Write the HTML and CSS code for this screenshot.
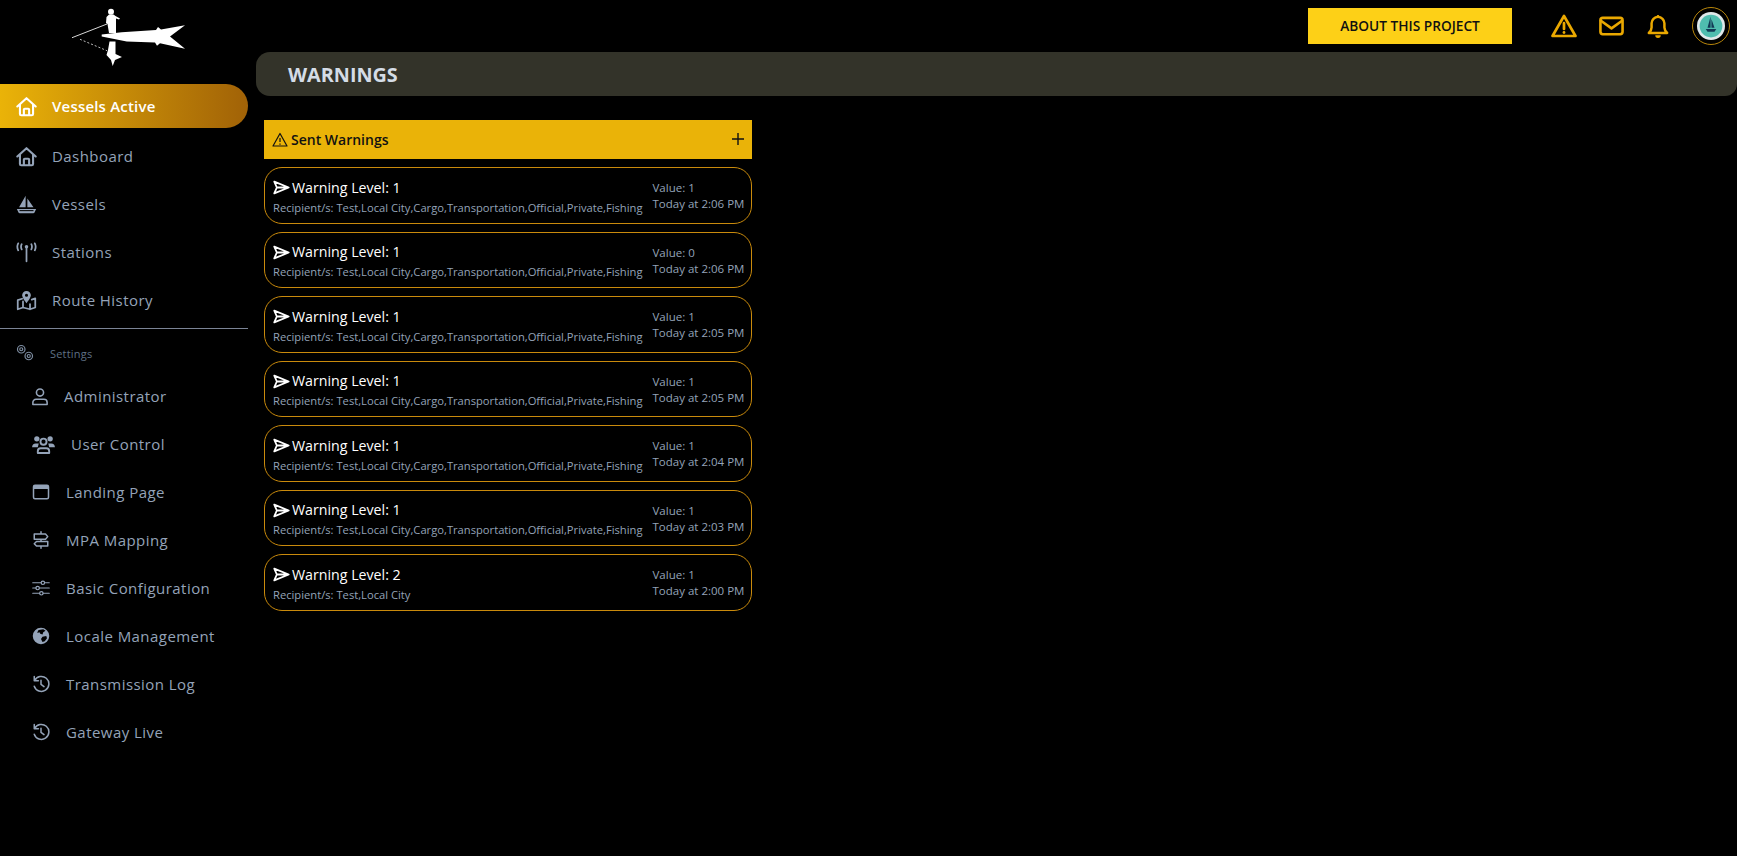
FILE: index.html
```html
<!DOCTYPE html>
<html lang="en">
<head>
<meta charset="utf-8">
<title>Warnings</title>
<link rel="stylesheet" href="styles.css">
</head>
<body>
<svg class="sprite" width="0" height="0" aria-hidden="true">
  <symbol id="i-home" viewBox="0 0 24 24"><path d="M1.500 12 12 2.500 22.500 12M4.500 10v10.500a1.500 1.500 0 0 0 1.500 1.500h12a1.500 1.500 0 0 0 1.500-1.500V10M9 22v-6.500a1 1 0 0 1 1-1h4a1 1 0 0 1 1 1V22" fill="none" stroke="currentColor" stroke-width="2.400" stroke-linecap="round" stroke-linejoin="round"/></symbol>
  <symbol id="i-send" viewBox="0 0 20 20"><path d="M1.500 3 18.500 10 1.500 17 4.500 10ZM4.500 10h14" fill="none" stroke="currentColor" stroke-width="2.100" stroke-linejoin="round"/></symbol>
</svg>
<div class="app">
  <aside class="sidebar">
    <div class="logo">
      <svg viewBox="0 0 140 75" width="140" height="75">
        <path class="logo-w" d="M41.700 34.500 61.700 32.200 96 30 98 27 101 29.500 125 25.300 110 36.500 125 48.700 100 43.300 97 45.700 95 42.500 66.700 41.500 41.700 36.500Z"/>
        <circle class="logo-w" cx="51" cy="11.700" r="3"/>
        <path class="logo-w" d="M46.500 17 49 14.500 53.500 14.500 55.500 16 60 18.500 59 19.500 56 18.500 56 33 49 33 47.500 24 46 23Z"/>
        <path class="logo-w" d="M49.500 41.500 55.500 41.500 55.500 54 62 57 55 60 52.700 66 51 60 46.500 55 48 50Z"/>
        <path class="logo-l" d="M12 37.700 47 24"/>
        <path class="logo-d" d="M20 39.300 47 50.700"/>
      </svg>
    </div>
    <nav class="nav">
      <a class="nav-item active"><svg class="ic"><use href="#i-home"/></svg><span>Vessels Active</span></a>
      <a class="nav-item"><svg class="ic"><use href="#i-home"/></svg><span>Dashboard</span></a>
      <a class="nav-item"><svg class="ic" viewBox="0 0 24 24"><path class="sf" d="M11 2v13H3.500ZM13 5l7 10h-7ZM1 17h22l-2 4.500a1.500 1.500 0 0 1-1.300.5H4.300A1.500 1.500 0 0 1 3 21.500Z"/><path class="bk" d="M4 19h16"/></svg><span>Vessels</span></a>
      <a class="nav-item"><svg class="ic" viewBox="0 0 24 24"><circle class="sf" cx="12" cy="5.500" r="2"/><path class="st" d="M12 7v15M6.500 2.500q-1.500 3 0 6M17.500 2.500q1.500 3 0 6M2.500 1.500q-2 4 0 8M21.500 1.500q2 4 0 8"/></svg><span>Stations</span></a>
      <a class="nav-item"><svg class="ic" viewBox="0 0 24 24"><path class="st" d="M7 10 2 11.500V22l6-2 8 2 6-2V9.500l-4 1.500M8 13v7M16 16v6"/><path class="sf" d="M12 1a5 5 0 0 0-5 5c0 3 5 9 5 9s5-6 5-9a5 5 0 0 0-5-5Zm0 3.200a1.800 1.800 0 1 1 0 3.600 1.800 1.800 0 0 1 0-3.600Z" fill-rule="evenodd"/></svg><span>Route History</span></a>
      <div class="rule"></div>
      <div class="section"><svg class="ic-sm" viewBox="0 0 24 24"><circle class="st thin" cx="7" cy="7" r="2"/><circle class="st thin" cx="7" cy="7" r="5"/><circle class="st thin" cx="17" cy="16" r="2"/><circle class="st thin" cx="17" cy="16" r="5"/></svg><span>Settings</span></div>
      <a class="nav-item sub"><svg class="ic narrow" viewBox="2 0 20 24"><circle class="st" cx="12" cy="7" r="4.500"/><path class="st" d="M3 22v-2.500a4 4 0 0 1 4-4h10a4 4 0 0 1 4 4V22Z"/></svg><span>Administrator</span></a>
      <a class="nav-item sub"><svg class="ic wide" viewBox="0 2 24 20"><circle class="sf" cx="5" cy="6" r="2.800"/><circle class="sf" cx="19" cy="6" r="2.800"/><circle class="st" cx="12" cy="9" r="3.200"/><path class="sf" d="M0 15a4 4 0 0 1 4-4h3l-1 4H0ZM24 15a4 4 0 0 0-4-4h-3l1 4h6Z"/><path class="st" d="M6 21v-2a3 3 0 0 1 3-3h6a3 3 0 0 1 3 3v2Z"/></svg><span>User Control</span></a>
      <a class="nav-item sub"><svg class="ic" viewBox="0 0 24 24"><rect class="st" x="2" y="3" width="20" height="18" rx="2"/><path class="sf" d="M2 5a2 2 0 0 1 2-2h16a2 2 0 0 1 2 2v3H2Z"/></svg><span>Landing Page</span></a>
      <a class="nav-item sub"><svg class="ic" viewBox="0 0 24 24"><path class="st" d="M12 1v3M12 11v3M12 20v3M3 4h15l3 3.500-3 3.500H3ZM21 14H6l-3 3 3 3h15Z"/></svg><span>MPA Mapping</span></a>
      <a class="nav-item sub"><svg class="ic" viewBox="0 0 24 24"><path class="st thin" d="M1 5h11M17 5h6M1 12h4M10 12h13M1 19h9M15 19h8"/><circle class="st thin" cx="14.500" cy="5" r="2.300"/><circle class="st thin" cx="7.500" cy="12" r="2.300"/><circle class="st thin" cx="12.500" cy="19" r="2.300"/></svg><span>Basic Configuration</span></a>
      <a class="nav-item sub"><svg class="ic" viewBox="0 0 24 24"><path class="sf" fill-rule="evenodd" d="M12 1a11 11 0 1 0 0 22 11 11 0 0 0 0-22ZM9 4l6-1 3 2-3 2-1 3-3-1-1-2-3 1 1-3ZM14 13l5-1 1 3-3 4-3 1-2-4Z"/></svg><span>Locale Management</span></a>
      <a class="nav-item sub"><svg class="ic" viewBox="0 0 24 24"><path class="st" d="M3.500 7.500A10 10 0 1 1 3 15M3 2v5.500h5.500M12 7v5.500l4 3"/></svg><span>Transmission Log</span></a>
      <a class="nav-item sub"><svg class="ic" viewBox="0 0 24 24"><path class="st" d="M3.500 7.500A10 10 0 1 1 3 15M3 2v5.500h5.500M12 7v5.500l4 3"/></svg><span>Gateway Live</span></a>
    </nav>
  </aside>
  <main class="main">
    <header class="topbar">
      <a class="about">ABOUT THIS PROJECT</a>
      <div class="top-icons">
        <svg class="top-ic warn" viewBox="0 0 26 24"><path class="ts" d="M13 2 24.500 22H1.500Z"/><path class="ts" d="M13 9v6"/><circle class="tf" cx="13" cy="18.500" r="1.400"/></svg>
        <svg class="top-ic mail" viewBox="0 0 26 20"><rect class="ts" x="1.500" y="1.500" width="23" height="17" rx="2.500"/><path class="ts" d="m2 4.500 11 8 11-8"/></svg>
        <svg class="top-ic bell" viewBox="0 0 24 26"><path class="ts" d="M2 20c2-2 3-3 3-6V9.500a7 7 0 0 1 14 0V14c0 3 1 4 3 6Z"/><path class="tf" d="M9 22.500h6a3 3 0 0 1-6 0ZM10.500 2a1.500 1.500 0 0 1 3 0v1h-3Z"/></svg>
        <div class="avatar">
          <svg viewBox="0 0 32 32" width="28" height="28">
            <circle cx="16" cy="16" r="16" fill="#dfe8ea"/>
            <circle cx="16" cy="16" r="13" fill="#4fbdaf"/>
            <path d="M15.500 5 12 18h3.500ZM16.500 8l3.500 10h-3.500ZM10 19.500h12l-2 3h-8Z" fill="#123a56"/>
          </svg>
        </div>
      </div>
    </header>
    <div class="title-bar"><h1>WARNINGS</h1></div>
    <section class="panel">
      <div class="panel-head">
        <svg class="head-ic" viewBox="0 0 16 16"><path d="M8 1.500 15 14H1Z M8 6v4M8 11.500v1.200" fill="none" stroke="currentColor" stroke-width="1.200" stroke-linejoin="round"/></svg>
        <span class="head-title">Sent Warnings</span>
        <svg class="plus" viewBox="0 0 12 12"><path d="M6 0v12M0 6h12" fill="none" stroke="currentColor" stroke-width="1.400"/></svg>
      </div>
      <ul class="cards">
        <li class="card"><div class="card-left"><div class="level"><svg class="send"><use href="#i-send"/></svg>Warning Level: 1</div><div class="recip">Recipient/s: Test,Local City,Cargo,Transportation,Official,Private,Fishing</div></div><div class="card-right"><div>Value: 1</div><div>Today at 2:06 PM</div></div></li>
        <li class="card"><div class="card-left"><div class="level"><svg class="send"><use href="#i-send"/></svg>Warning Level: 1</div><div class="recip">Recipient/s: Test,Local City,Cargo,Transportation,Official,Private,Fishing</div></div><div class="card-right"><div>Value: 0</div><div>Today at 2:06 PM</div></div></li>
        <li class="card"><div class="card-left"><div class="level"><svg class="send"><use href="#i-send"/></svg>Warning Level: 1</div><div class="recip">Recipient/s: Test,Local City,Cargo,Transportation,Official,Private,Fishing</div></div><div class="card-right"><div>Value: 1</div><div>Today at 2:05 PM</div></div></li>
        <li class="card"><div class="card-left"><div class="level"><svg class="send"><use href="#i-send"/></svg>Warning Level: 1</div><div class="recip">Recipient/s: Test,Local City,Cargo,Transportation,Official,Private,Fishing</div></div><div class="card-right"><div>Value: 1</div><div>Today at 2:05 PM</div></div></li>
        <li class="card"><div class="card-left"><div class="level"><svg class="send"><use href="#i-send"/></svg>Warning Level: 1</div><div class="recip">Recipient/s: Test,Local City,Cargo,Transportation,Official,Private,Fishing</div></div><div class="card-right"><div>Value: 1</div><div>Today at 2:04 PM</div></div></li>
        <li class="card"><div class="card-left"><div class="level"><svg class="send"><use href="#i-send"/></svg>Warning Level: 1</div><div class="recip">Recipient/s: Test,Local City,Cargo,Transportation,Official,Private,Fishing</div></div><div class="card-right"><div>Value: 1</div><div>Today at 2:03 PM</div></div></li>
        <li class="card"><div class="card-left"><div class="level"><svg class="send"><use href="#i-send"/></svg>Warning Level: 2</div><div class="recip">Recipient/s: Test,Local City</div></div><div class="card-right"><div>Value: 1</div><div>Today at 2:00 PM</div></div></li>
      </ul>
    </section>
  </main>
</div>
</body>
</html>
```
FILE: styles.css
```css
* { box-sizing: border-box; }
html, body { margin: 0; height: 100%; background: #000; overflow: hidden; }
body { font-family: "Open Sans", "Noto Sans", "Liberation Sans", sans-serif; color: #94a3b8; }
.sprite { position: absolute; }
.app { display: flex; height: 856px; }

.sidebar { width: 248px; flex: none; }
.logo { height: 84px; padding-left: 60px; }
.logo svg { display: block; }
.logo-w { fill: #fff; }
.logo-l { fill: none; stroke: #d8d8d8; stroke-width: 1; }
.logo-d { fill: none; stroke: #bdbdbd; stroke-width: 1; stroke-dasharray: 2 2; }
.nav { display: flex; flex-direction: column; }
.nav-item { display: flex; align-items: center; height: 48px; padding-left: 16px; gap: 15px; font-size: 15px; letter-spacing: .45px; color: #94a3b8; }
.nav-item.active { height: 44px; margin-bottom: 4px; background: linear-gradient(90deg, #eab308, #a16207); border-radius: 0 22px 22px 0; color: #fff; font-weight: 600; letter-spacing: .2px; }
.nav-item .ic { width: 21px; height: 21px; flex: none; }
.nav-item.sub { padding-left: 32px; gap: 16px; }
.nav-item.sub .ic { width: 18px; height: 18px; }
.nav-item.sub .ic.narrow { width: 16px; height: 19px; }
.nav-item.sub .ic.wide { width: 23px; height: 19px; }
.rule { height: 1px; background: #7b8496; margin-top: 4px; }
.section { display: flex; align-items: center; gap: 16px; height: 43px; padding: 5px 0 0 16px; font-size: 11px; color: #5f7085; letter-spacing: .2px; }
.ic-sm { width: 18px; height: 18px; color: #7e8ea3; flex: none; }
.st { fill: none; stroke: currentColor; stroke-width: 2; stroke-linecap: round; stroke-linejoin: round; }
.st.thin { stroke-width: 1.600; }
.sf { fill: currentColor; }
.bk { fill: none; stroke: #000; stroke-width: 1.200; }

.main { flex: 1; min-width: 0; padding-left: 8px; }
.topbar { height: 52px; display: flex; align-items: center; justify-content: flex-end; }
.about { width: 204px; height: 36px; margin-top: -1px; background: #fdd017; color: #111; font-size: 13.700px; font-weight: 600; display: flex; align-items: center; justify-content: center; }
.top-icons { display: flex; align-items: center; margin-left: 39px; padding-right: 7px; }
.top-ic { display: block; flex: none; }
.warn { width: 26px; height: 24px; }
.mail { width: 25px; height: 20px; margin-left: 22px; }
.bell { width: 22px; height: 25px; margin-left: 23px; }
.ts { fill: none; stroke: #eaa800; stroke-width: 2.700; stroke-linejoin: round; stroke-linecap: round; }
.tf { fill: #eaa800; }
.avatar { width: 38px; height: 38px; margin-left: 23px; border: 1px solid #b8860b; border-radius: 50%; display: flex; align-items: center; justify-content: center; }
.title-bar { height: 44px; background: #333329; border-radius: 14px 0 12px 14px; display: flex; align-items: center; padding-left: 32px; }
.title-bar h1 { margin: 0; font-size: 19.800px; font-weight: 700; color: #d4dce6; }

.panel { width: 488px; margin: 24px 0 0 8px; }
.panel-head { height: 39px; background: #eab308; color: #111; display: flex; align-items: center; padding: 0 8px; }
.head-ic { width: 16px; height: 16px; margin-right: 3px; flex: none; }
.head-title { font-size: 14px; font-weight: 600; flex: 1; }
.plus { width: 12px; height: 12px; flex: none; margin-top: -1px; }
.cards { list-style: none; margin: 8px 0 0; padding: 0; display: flex; flex-direction: column; gap: 8px; }
.card { height: 56.500px; border: 1px solid #c98a0c; border-radius: 18px; display: flex; justify-content: space-between; align-items: center; padding: 0 8px; }
.card-left { margin-top: 3.500px; }
.level { display: flex; align-items: center; color: #fff; font-size: 14.200px; line-height: 20px; gap: 2px; }
.send { width: 17px; height: 17px; flex: none; color: #fff; }
.recip { font-size: 11.200px; line-height: 18px; color: #94a3b8; margin-top: 1px; white-space: nowrap; }
.card-right { width: 90.500px; font-size: 11.500px; line-height: 16px; color: #94a3b8; margin-top: 2px; white-space: nowrap; }
```
